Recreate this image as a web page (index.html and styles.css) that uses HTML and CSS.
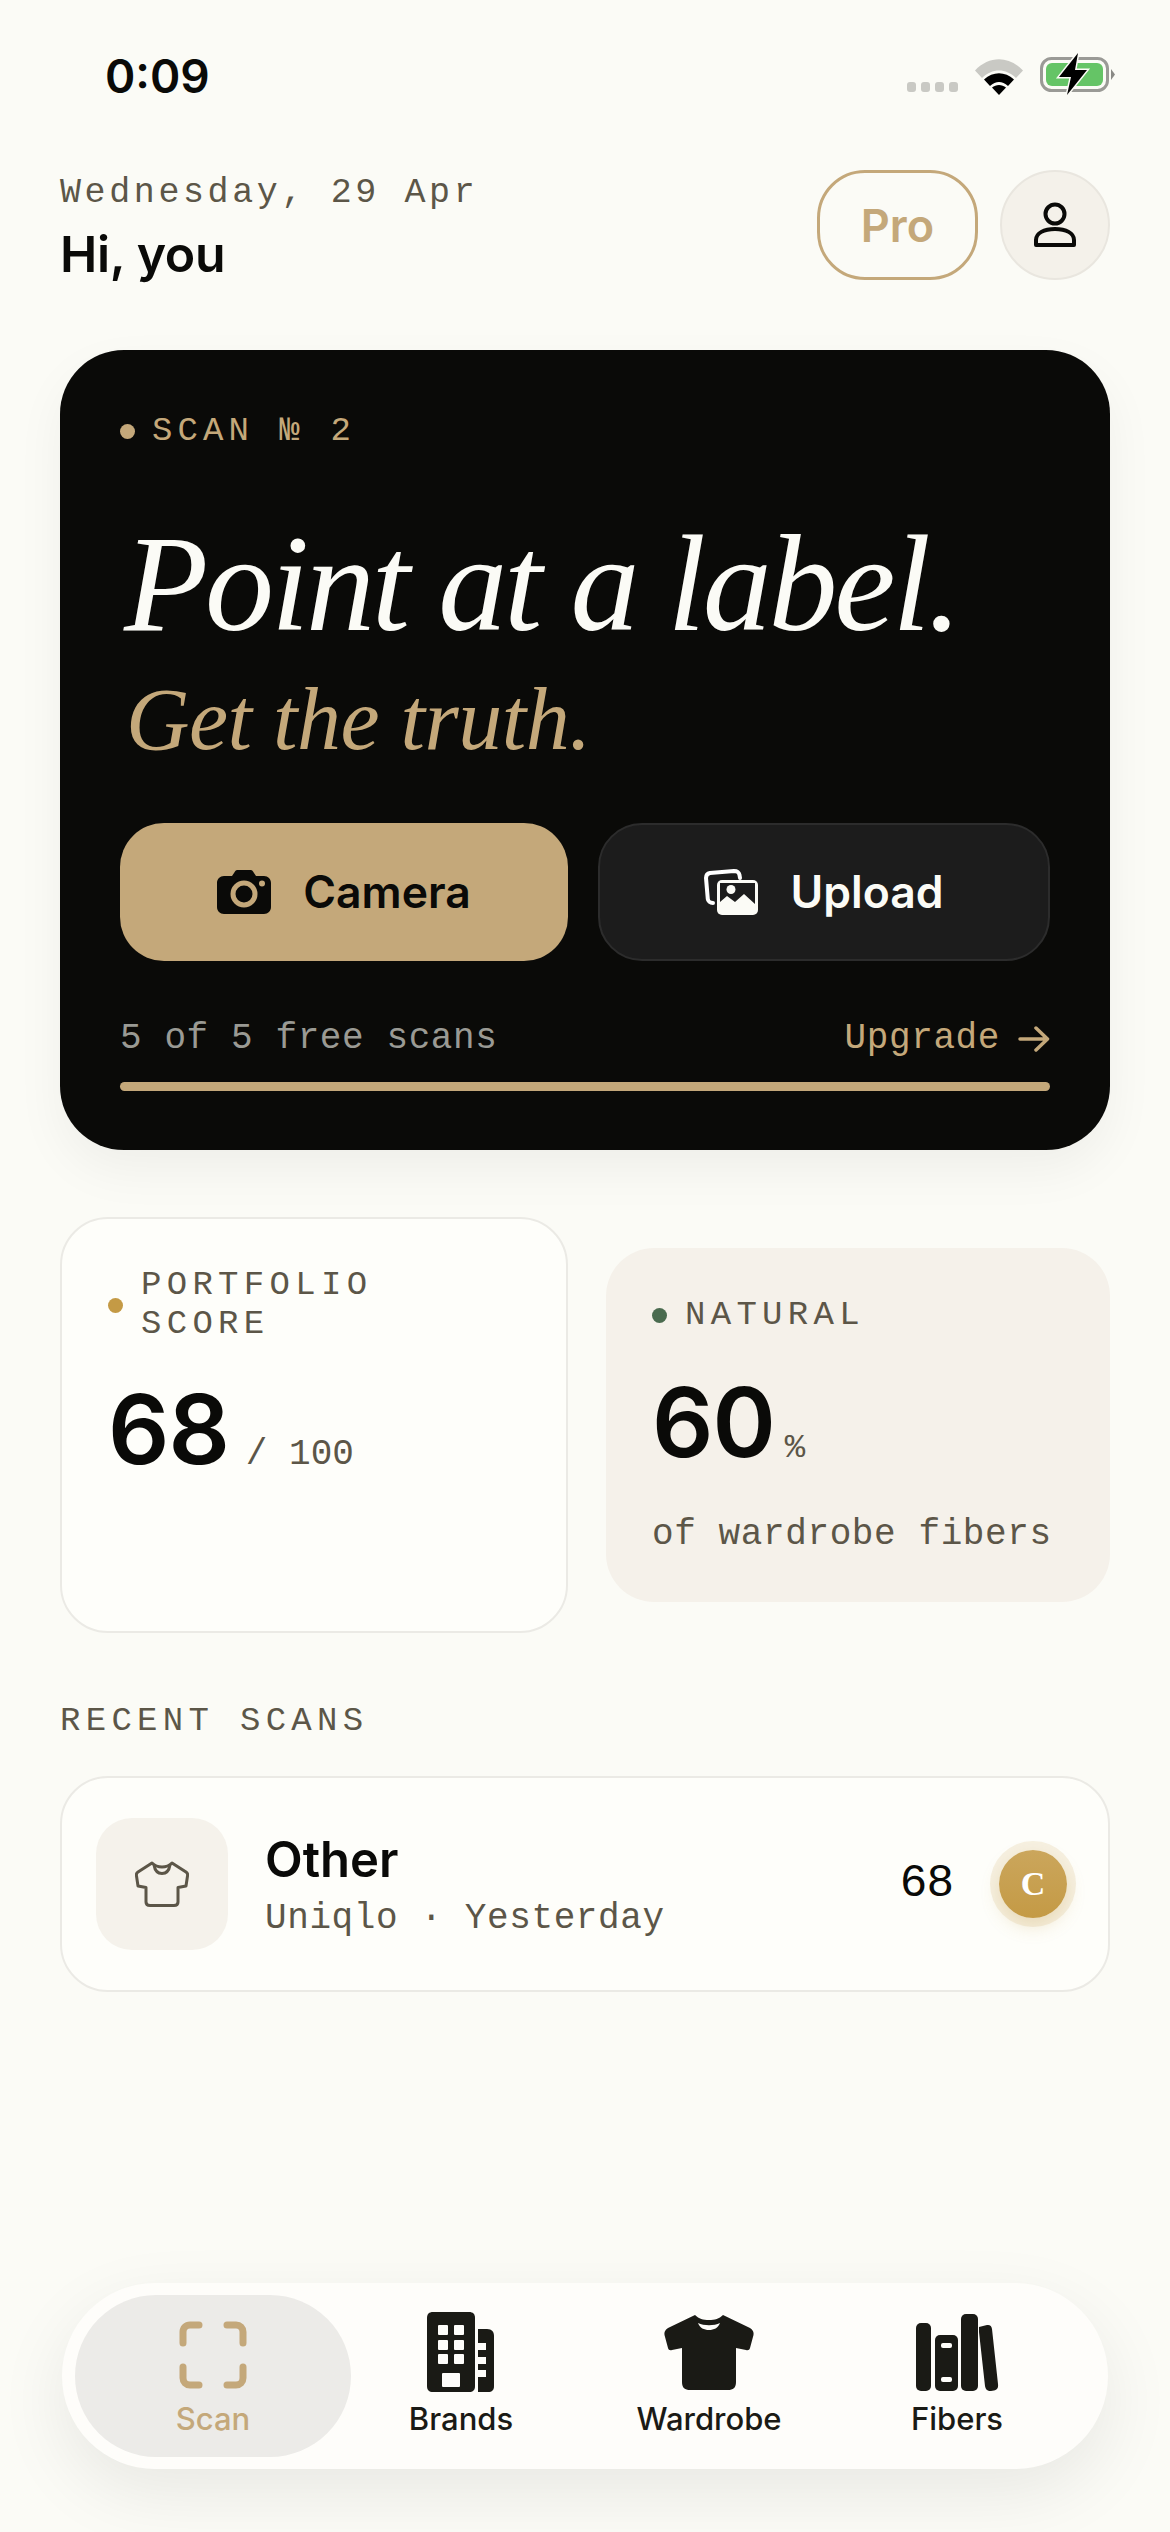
FILE: index.html
```html
<!DOCTYPE html>
<html>
<head>
<meta charset="utf-8"/>
<title>Scan</title>
<link rel="stylesheet" href="styles.css">
</head>
<body>
<div class="screen">

<div class="status">
	<span class="time">0:09</span>
	<div class="status-icons">
		<div class="signal"><i></i><i></i><i></i><i></i></div>
		<svg class="wifi" width="48" height="36" viewBox="0 0 48 36">
			<path d="M0 11.5C14 -3.5 34 -3.5 48 11.5L41 19C31 9 17 9 7 19Z" fill="#c9c9c4"/>
			<path d="M9 20.5C18 12 30 12 39 20.5L33 27C27 21.5 21 21.5 15 27Z" fill="#000"/>
			<path d="M17 28.5C21 25 27 25 31 28.5L24 36Z" fill="#000"/>
		</svg>
		<svg class="battery" width="76" height="42" viewBox="0 0 76 42">
			<rect x="1.5" y="5.5" width="66" height="32" rx="10" fill="none" stroke="#9a9a96" stroke-width="3"/>
			<rect x="6" y="10" width="57" height="23" rx="6" fill="#65c466"/>
			<path d="M71 16L75 21.500L71 27Z" fill="#8a8a86"/>
			<path d="M38 0L19 24H31L27 42L47 17H35Z" fill="#000" stroke="#fbfbf6" stroke-width="3" paint-order="stroke"/>
		</svg>
	</div>
</div>

<header class="top">
	<div>
		<div class="date">Wednesday, 29 Apr</div>
		<div class="hello">Hi, you</div>
	</div>
	<div class="top-actions">
		<div class="pro">Pro</div>
		<div class="avatar">
			<svg width="44" height="46" viewBox="0 0 44 46" fill="none" stroke="#0a0a08" stroke-width="4">
				<circle cx="22" cy="12" r="9.500"/>
				<path d="M3 43V38C3 31 11 27 22 27S41 31 41 38V43Z" stroke-linejoin="round"/>
			</svg>
		</div>
	</div>
</header>

<section class="hero">
	<div class="eyebrow"><i class="dot dot-tan"></i>SCAN № 2</div>
	<h1 class="hero-title">Point at a label.</h1>
	<div class="hero-sub">Get the truth.</div>
	<div class="hero-btns">
		<div class="btn btn-camera">
			<svg width="54" height="44" viewBox="0 0 54 44">
				<path d="M7 6H15L18 1.500C18.500 .5 19.500 0 20.500 0H33.500C34.500 0 35.500 .5 36 1.500L39 6H47C51 6 54 9 54 13V37C54 41 51 44 47 44H7C3 44 0 41 0 37V13C0 9 3 6 7 6Z" fill="#0a0a08"/>
				<circle cx="27" cy="24" r="11" fill="none" stroke="#c4a87a" stroke-width="5"/>
				<circle cx="45" cy="13.500" r="3" fill="#c4a87a"/>
			</svg>
			Camera
		</div>
		<div class="btn btn-upload">
			<svg width="54" height="46" viewBox="0 0 54 46">
				<path d="M9 34C6 34 4 32 3.800 30L2 9C2 6 3.500 4.500 6 4L30 2C33 2 35 3.500 35.500 6L36 9" fill="none" stroke="#fff" stroke-width="4" stroke-linecap="round"/>
				<rect x="13" y="11" width="41" height="35" rx="5" fill="#fbfbf6"/>
				<path d="M16 14H51V35L40 25L31 33L23 27L16 33Z" fill="#1c1c1c"/>
				<circle cx="27" cy="20.500" r="4.500" fill="#fbfbf6"/>
			</svg>
			Upload
		</div>
	</div>
	<div class="quota">
		<span>5 of 5 free scans</span>
		<span class="upgrade">Upgrade
			<svg width="32" height="26" viewBox="0 0 32 26" fill="none" stroke="#c4a87a" stroke-width="3.500" stroke-linecap="round" stroke-linejoin="round">
				<path d="M2 13H29M18 2L29.500 13L18 24"/>
			</svg>
		</span>
	</div>
	<div class="bar"></div>
</section>

<div class="stats">
	<div class="stat stat-score">
		<div class="label"><i class="dot dot-gold"></i><span>PORTFOLIO<br>SCORE</span></div>
		<div class="figure"><b>68</b><span class="of">/ 100</span></div>
	</div>
	<div class="stat stat-natural">
		<div class="label"><i class="dot dot-green"></i><span>NATURAL</span></div>
		<div class="figure"><b>60</b><span class="pct">%</span></div>
		<div class="note">of wardrobe fibers</div>
	</div>
</div>

<div class="section-head">RECENT SCANS</div>

<div class="scan-row">
	<div class="thumb">
		<svg width="54" height="46" viewBox="0 0 54 46" fill="none" stroke="#5c5648" stroke-width="3" stroke-linejoin="round">
			<path d="M17 2L3 11C1.500 12 1 13 1.500 15L3 25L11 26.500V41C11 43.500 12.500 44.500 15 44.500H39C41.500 44.500 43 43.500 43 41V26.500L51 25L52.500 15C53 13 52.500 12 51 11L37 2C34 5 31 6 27 6S20 5 17 2Z"/>
			<path d="M19 4C20 10 23 12.500 27 12.500S34 10 35 4"/>
		</svg>
	</div>
	<div class="scan-text">
		<div class="scan-name">Other</div>
		<div class="scan-meta">Uniqlo · Yesterday</div>
	</div>
	<div class="scan-num">68</div>
	<div class="grade">C</div>
</div>

<nav class="tabs">
	<div class="tab tab-on">
		<svg width="68" height="68" viewBox="0 0 68 68" fill="none" stroke="#c4a87a" stroke-width="7" stroke-linecap="round">
			<path d="M4 22V11C4 7 7 4 11 4H20"/>
			<path d="M48 4H57C61 4 64 7 64 11V22"/>
			<path d="M4 46V57C4 61 7 64 11 64H20"/>
			<path d="M48 64H57C61 64 64 61 64 57V46"/>
		</svg>
		<span>Scan</span>
	</div>
	<div class="tab">
		<svg width="68" height="80" viewBox="0 0 68 80">
			<path d="M6 0H42C46 0 48 2 48 6V74C48 78 46 80 42 80H6C2 80 0 78 0 74V6C0 2 2 0 6 0Z" fill="#1a1a15"/>
			<path d="M51 17H60C65 17 67 20 67 24V74C67 78 65 80 61 80H51Z" fill="#1a1a15"/>
			<g fill="#fefdfa">
				<rect x="11" y="13" width="10" height="10" rx="1"/><rect x="27" y="13" width="10" height="10" rx="1"/>
				<rect x="11" y="28" width="10" height="10" rx="1"/><rect x="27" y="28" width="10" height="10" rx="1"/>
				<rect x="11" y="42" width="10" height="10" rx="1"/><rect x="27" y="42" width="10" height="10" rx="1"/>
				<rect x="15" y="61" width="18" height="14" rx="1"/>
				<rect x="51" y="31" width="8" height="7"/><rect x="51" y="45" width="8" height="7"/><rect x="51" y="58" width="8" height="7"/>
			</g>
		</svg>
		<span>Brands</span>
	</div>
	<div class="tab">
		<svg width="90" height="80" viewBox="0 0 90 80">
			<path d="M31 3C35 7 39 8 45 8S55 7 59 3L86 16C89 18 90 20 89.500 23L86 36C85.500 38 84 38.500 82 38L72 36V70C72 76 69 78 64 78H26C21 78 18 76 18 70V36L8 38C6 38.500 4.500 38 4 36L.5 23C0 20 1 18 4 16Z" fill="#1a1a15"/>
			<path d="M34 11C40 14 50 14 56 11C54 16 50 18 45 18S36 16 34 11Z" fill="#fefdfa"/>
		</svg>
		<span>Wardrobe</span>
	</div>
	<div class="tab">
		<svg width="84" height="80" viewBox="0 0 84 80">
			<g fill="#1a1a15">
				<rect x="1" y="11" width="15" height="68" rx="5"/>
				<rect x="20" y="23" width="23" height="56" rx="5"/>
				<rect x="46" y="2" width="17" height="77" rx="5"/>
				<path d="M64 15L72 13C75 12.500 76.500 14 77 17L83 72C83.500 76 82 78 79 78.500L76 79C72 79 70.500 77 70 74L64 20Z"/>
			</g>
			<g fill="#fefdfa">
				<rect x="26" y="31" width="11" height="5" rx="2"/>
				<rect x="26" y="65" width="11" height="5" rx="2"/>
			</g>
		</svg>
		<span>Fibers</span>
	</div>
</nav>

</div>
</body>
</html>
```

FILE: styles.css
```css
* {
	box-sizing: border-box;
}
body {
	margin: 0;
	background: #fbfbf6;
	color: #0a0a08;
	font-family: Inter, "Liberation Sans", sans-serif;
}
.screen {
	position: relative;
	width: 1170px;
	height: 2532px;
	overflow: hidden;
	padding: 0 60px;
}

/* status bar */
.status {
	display: flex;
	justify-content: space-between;
	align-items: flex-start;
	height: 173px;
	padding: 48px 0 0 45px;
}
.time {
	font-size: 46px;
	line-height: 56px;
	font-weight: 600;
}
.status-icons {
	display: flex;
	align-items: flex-end;
	gap: 17px;
	margin: 5px -6px 0 0;
}
.signal {
	display: flex;
	gap: 5px;
	margin-bottom: 3px;
}
.signal i {
	width: 9px;
	height: 10px;
	border-radius: 3px;
	background: #c9c9c4;
}

/* header */
.top {
	display: flex;
	justify-content: space-between;
	align-items: flex-start;
	height: 177px;
}
.date {
	font-family: "Liberation Mono", monospace;
	font-size: 35px;
	line-height: 40px;
	letter-spacing: 3.600px;
	color: #5c5648;
}
.hello {
	margin-top: 11px;
	font-size: 50px;
	line-height: 60px;
	font-weight: 600;
	letter-spacing: -.3px;
}
.top-actions {
	display: flex;
	gap: 22px;
	margin-top: -3px;
}
.pro {
	display: flex;
	align-items: center;
	justify-content: center;
	width: 161px;
	height: 110px;
	border: 3px solid #c4a87a;
	border-radius: 48px;
	font-size: 45px;
	font-weight: 600;
	color: #c4a87a;
}
.avatar {
	display: flex;
	align-items: center;
	justify-content: center;
	width: 110px;
	height: 110px;
	border-radius: 50%;
	border: 2px solid #e9e6df;
	background: #f4f1ea;
}

/* hero card */
.hero {
	height: 800px;
	padding: 61px 60px 0;
	border-radius: 64px;
	background: #0a0a08;
	box-shadow: 0 20px 50px rgba(0, 0, 0, .05);
}
.eyebrow {
	display: flex;
	align-items: center;
	gap: 17px;
	font-family: "Liberation Mono", monospace;
	font-size: 34px;
	line-height: 40px;
	letter-spacing: 5.100px;
	color: #c4a87a;
}
.dot {
	flex: none;
	width: 15px;
	height: 15px;
	border-radius: 50%;
}
.dot-tan {
	background: #c4a87a;
}
.dot-gold {
	background: #c49a45;
}
.dot-green {
	background: #4a6b4f;
}
.hero-title {
	margin: 58px 0 0 4px;
	font-family: "Liberation Serif", serif;
	font-style: italic;
	font-weight: 400;
	font-size: 138px;
	line-height: 150px;
	letter-spacing: -3.200px;
	white-space: nowrap;
	color: #fbfbf6;
}
.hero-sub {
	margin: 9px 0 0 6px;
	font-family: "Liberation Serif", serif;
	font-style: italic;
	font-size: 88px;
	line-height: 104px;
	letter-spacing: -.5px;
	color: #c4a87a;
}
.hero-btns {
	display: flex;
	gap: 30px;
	margin-top: 51px;
}
.btn {
	display: flex;
	flex: 1;
	align-items: center;
	justify-content: center;
	gap: 32px;
	height: 138px;
	border-radius: 44px;
	font-size: 44.500px;
	font-weight: 600;
}
.btn-camera {
	background: #c4a87a;
	color: #0a0a08;
}
.btn-upload {
	background: #1c1c1c;
	border: 2px solid #2c2c2c;
	color: #fbfbf6;
}
.quota {
	display: flex;
	justify-content: space-between;
	align-items: center;
	margin-top: 56px;
	font-family: "Liberation Mono", monospace;
	font-size: 36px;
	line-height: 44px;
	letter-spacing: .6px;
	color: #9a9a94;
}
.upgrade {
	display: flex;
	align-items: center;
	gap: 18px;
	color: #c4a87a;
}
.bar {
	height: 9px;
	margin-top: 21px;
	border-radius: 5px;
	background: #c4a87a;
}

/* stats */
.stats {
	display: flex;
	align-items: center;
	gap: 38px;
	margin-top: 67px;
}
.stat {
	flex: 1;
	border-radius: 48px;
}
.stat-score {
	height: 416px;
	padding: 47px 46px 0;
	background: #fefefa;
	border: 2px solid #ebeae5;
}
.stat-natural {
	height: 354px;
	padding: 48px 46px 0;
	background: #f5f1ea;
}
.label {
	display: flex;
	align-items: center;
	gap: 18px;
	font-family: "Liberation Mono", monospace;
	font-size: 34px;
	line-height: 39px;
	letter-spacing: 5.300px;
	color: #5c5648;
}
.figure {
	display: flex;
	align-items: baseline;
	margin-top: 27px;
	font-family: "Liberation Mono", monospace;
	color: #5c5648;
}
.figure b {
	font-family: Inter, "Liberation Sans", sans-serif;
	font-size: 96px;
	line-height: 116px;
	font-weight: 600;
	letter-spacing: -1px;
	color: #0a0a08;
}
.of {
	margin-left: 17px;
	font-size: 36px;
}
.pct {
	margin-left: 10px;
	font-size: 34px;
}
.stat-natural .figure {
	margin-top: 29px;
}
.note {
	margin-top: 33px;
	font-family: "Liberation Mono", monospace;
	font-size: 36px;
	line-height: 44px;
	letter-spacing: .6px;
	color: #5c5648;
}

/* recent */
.section-head {
	margin-top: 68px;
	font-family: "Liberation Mono", monospace;
	font-size: 34px;
	line-height: 40px;
	letter-spacing: 5.300px;
	color: #5c5648;
}
.scan-row {
	display: flex;
	align-items: center;
	height: 216px;
	margin-top: 35px;
	padding: 0 41px 0 34px;
	background: #fefefa;
	border: 2px solid #ebeae5;
	border-radius: 48px;
}
.thumb {
	display: flex;
	flex: none;
	align-items: center;
	justify-content: center;
	width: 132px;
	height: 132px;
	border-radius: 36px;
	background: #f5f2eb;
}
.scan-text {
	flex: 1;
	margin-left: 37px;
	padding-top: 3px;
}
.scan-name {
	font-size: 49px;
	line-height: 58px;
	font-weight: 600;
}
.scan-meta {
	margin-top: 8px;
	font-family: "Liberation Mono", monospace;
	font-size: 36px;
	line-height: 44px;
	letter-spacing: .6px;
	color: #5c5648;
}
.scan-num {
	font-family: "Liberation Mono", monospace;
	font-size: 46px;
	letter-spacing: -1px;
}
.grade {
	display: flex;
	align-items: center;
	justify-content: center;
	width: 68px;
	height: 68px;
	margin-left: 46px;
	border-radius: 50%;
	background: linear-gradient(#cba65c, #c49a45);
	box-shadow: 0 0 0 9px rgba(196, 154, 69, .14), 0 8px 18px rgba(196, 154, 69, .25);
	font-family: "Liberation Serif", serif;
	font-weight: 700;
	font-size: 34px;
	color: #fff;
}

/* bottom tabs, floats over the page */
.tabs {
	position: absolute;
	left: 62px;
	top: 2283px;
	display: grid;
	grid-template-columns: repeat(4, 1fr);
	width: 1046px;
	height: 186px;
	padding: 12px 27px;
	border-radius: 93px;
	background: #fefdfa;
	box-shadow: 0 24px 70px rgba(0, 0, 0, .08);
}
.tab {
	display: flex;
	flex-direction: column;
	align-items: center;
	justify-content: flex-end;
	padding-bottom: 19px;
	font-size: 31px;
	line-height: 38px;
	font-weight: 500;
	color: #1a1a15;
}
.tab svg {
	margin-bottom: 8px;
}
.tab-on {
	margin: 0 -14px;
	border-radius: 81px;
	background: #ecebe8;
	color: #c4a87a;
}
.tab-on svg {
	margin-bottom: 11px;
}
```
